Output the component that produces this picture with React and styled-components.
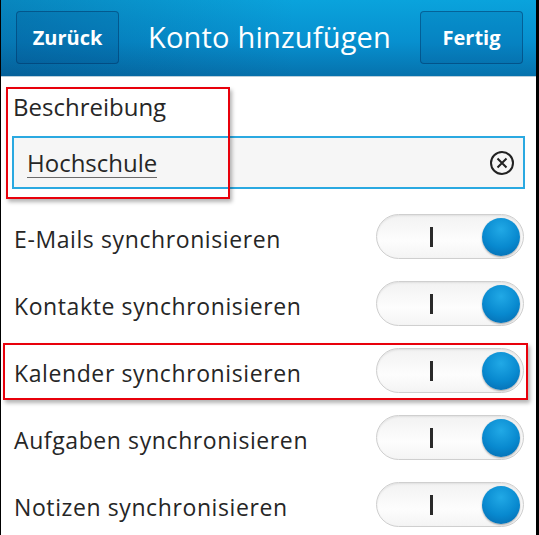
import React from "react";
import styled, { createGlobalStyle } from "styled-components";

const GlobalStyle = createGlobalStyle`
  html, body {
    margin: 0;
    padding: 0;
    background: #000;
  }
  #root {
    width: 539px;
    height: 535px;
    background: #000;
  }
`;

const Screen = styled.div`
  margin-left: 1px;
  width: 535px;
  height: 535px;
  background: #fff;
  overflow: hidden;
  font-family: "Open Sans", "Noto Sans", sans-serif;
  color: #262626;
`;

const Header = styled.div`
  height: 77px;
  box-sizing: border-box;
  display: flex;
  align-items: center;
  justify-content: space-between;
  padding: 0 13px 0 15px;
  background: linear-gradient(to right, rgba(0, 30, 80, 0.22), rgba(0, 0, 0, 0) 55%),
    linear-gradient(to bottom, #0aa3dc 0%, #0790cf 55%, #0672ad 100%);
  border-bottom: 1px solid #b9cfdc;
`;

const HeaderButton = styled.button`
  width: 103px;
  height: 53px;
  margin-top: -1px;
  border: 1px solid rgba(0, 45, 90, 0.45);
  border-radius: 4px;
  background: rgba(0, 60, 120, 0.14);
  color: #fff;
  font-family: "Open Sans", sans-serif;
  font-weight: 700;
  font-size: 20px;
  padding: 0;
`;

const Title = styled.div`
  color: #fff;
  font-size: 29px;
  letter-spacing: 0.2px;
  margin-top: -3px;
`;

const Body = styled.div`
  position: relative;
  padding: 14px 11px 0 11px;
`;

const Label = styled.div`
  font-size: 24px;
  line-height: 32px;
  padding-left: 1px;
`;

const InputBox = styled.div`
  margin-top: 13px;
  height: 53px;
  box-sizing: border-box;
  border: 2px solid #2aa9e1;
  background: #f6f6f6;
  display: flex;
  align-items: center;
  justify-content: space-between;
  padding: 0 8px 0 13px;
`;

const InputText = styled.span`
  font-size: 24px;
  border-bottom: 1px solid #6b6b6b;
  line-height: 28px;
  margin-top: 2px;
`;

const Marker = styled.div`
  position: absolute;
  left: ${(p) => p.$left}px;
  top: ${(p) => p.$top}px;
  width: ${(p) => p.$width}px;
  height: ${(p) => p.$height}px;
  border: 2px solid #e8000b;
  box-sizing: border-box;
  box-shadow: 2px 3px 4px rgba(0, 0, 0, 0.3);
  pointer-events: none;
`;

const List = styled.div`
  margin-top: 14px;
  display: flex;
  flex-direction: column;
`;

const Row = styled.div`
  height: 67px;
  display: flex;
  align-items: center;
  justify-content: space-between;
  position: relative;
  margin: 0 -9px;
  padding: 0 10px;
  box-sizing: border-box;
  ${(p) =>
    p.$marked &&
    `
    &::after {
      content: "";
      position: absolute;
      left: 0;
      right: 6px;
      top: 6px;
      bottom: 4px;
      border: 2px solid #e8000b;
      box-shadow: 2px 3px 4px rgba(0, 0, 0, 0.3);
      pointer-events: none;
    }
  `}
`;

const RowLabel = styled.span`
  font-size: 23px;
  letter-spacing: 0.6px;
  padding-left: 1px;
  margin-top: 4px;
`;

const Track = styled.div`
  width: 148px;
  height: 45px;
  box-sizing: border-box;
  border-radius: 23px;
  border: 1px solid #cfcfcf;
  background: linear-gradient(to bottom, #f2f2f2, #fdfdfd 60%, #f4f4f4);
  box-shadow: inset 0 1px 2px rgba(0, 0, 0, 0.08);
  display: flex;
  align-items: center;
  padding: 0 3px 0 0;
`;

const OnMark = styled.span`
  width: 2.5px;
  height: 20px;
  background: #2a2a2a;
  margin-left: 53px;
`;

const Knob = styled.span`
  margin-left: auto;
  width: 38px;
  height: 38px;
  border-radius: 50%;
  background: radial-gradient(circle at 50% 30%, #21a9e6 0%, #0889cf 55%, #0566aa 100%);
  box-shadow: 0 1px 2px rgba(0, 0, 0, 0.35);
`;

function ClearIcon() {
  return (
    <svg width="26" height="26" viewBox="0 0 26 26">
      <circle cx="13" cy="13" r="11" fill="none" stroke="#222" strokeWidth="2" />
      <path d="M8.5 8.5 L17.5 17.5 M17.5 8.5 L8.5 17.5" stroke="#222" strokeWidth="2" />
    </svg>
  );
}

const rows = [
  "E-Mails synchronisieren",
  "Kontakte synchronisieren",
  "Kalender synchronisieren",
  "Aufgaben synchronisieren",
  "Notizen synchronisieren",
];

export default function App() {
  return (
    <>
      <GlobalStyle />
      <Screen>
        <Header>
          <HeaderButton>Zurück</HeaderButton>
          <Title>Konto hinzufügen</Title>
          <HeaderButton>Fertig</HeaderButton>
        </Header>
        <Body>
          <Label>Beschreibung</Label>
          <InputBox>
            <InputText>Hochschule</InputText>
            <ClearIcon />
          </InputBox>
          <Marker $left={5} $top={10} $width={224} $height={112} />
          <List>
            {rows.map((r, i) => (
              <Row key={r} $marked={i === 2}>
                <RowLabel>{r}</RowLabel>
                <Track>
                  <OnMark />
                  <Knob />
                </Track>
              </Row>
            ))}
          </List>
        </Body>
      </Screen>
    </>
  );
}
